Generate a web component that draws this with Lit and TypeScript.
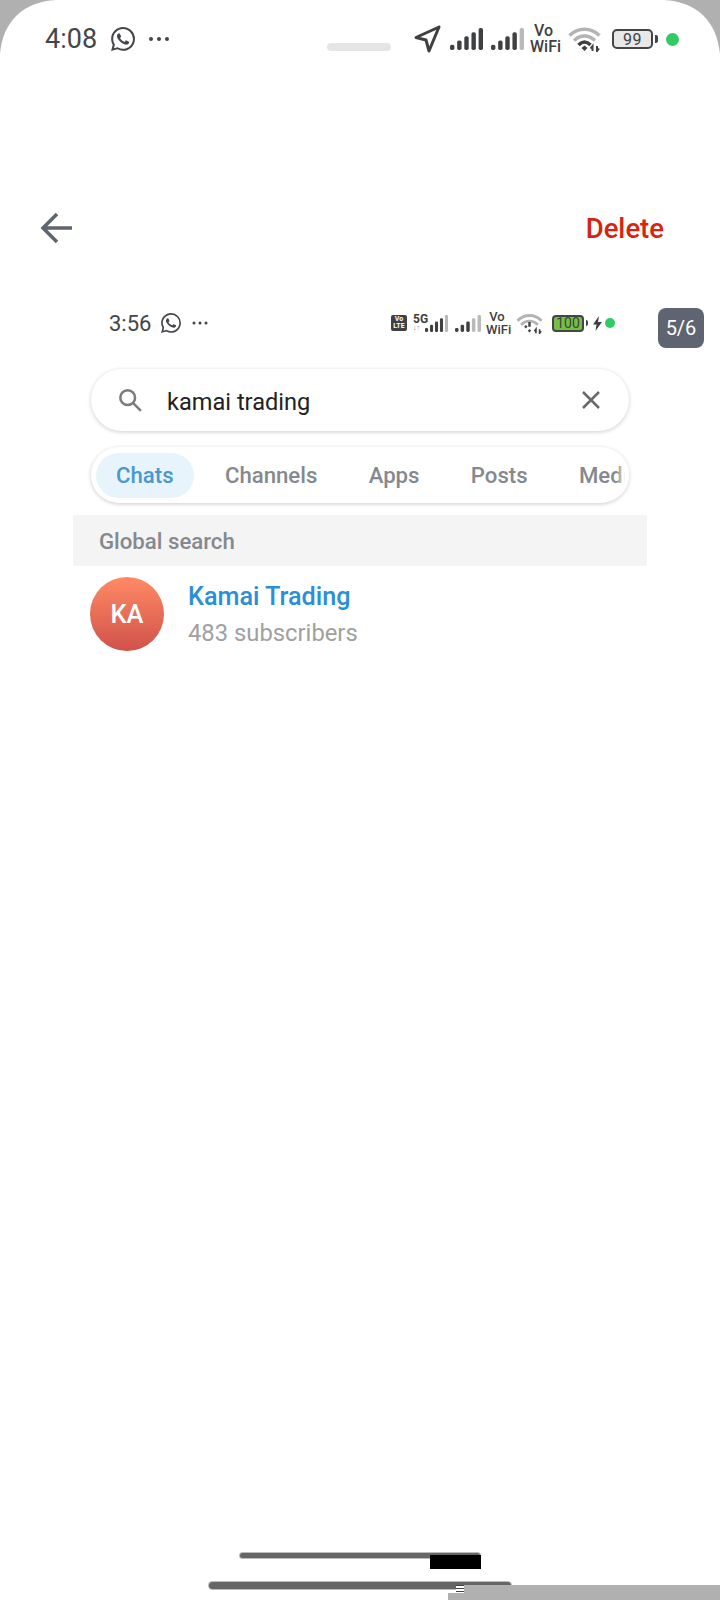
import { LitElement, css, html, svg } from "lit";
import { customElement } from "lit/decorators.js";

const whatsappPath =
  "M17.472 14.382c-.297-.149-1.758-.867-2.03-.967-.273-.099-.471-.148-.67.15-.197.297-.767.966-.94 1.164-.173.199-.347.223-.644.075-.297-.15-1.255-.463-2.39-1.475-.883-.788-1.48-1.761-1.653-2.059-.173-.297-.018-.458.13-.606.134-.133.298-.347.446-.52.149-.174.198-.298.298-.497.099-.198.05-.371-.025-.52-.075-.149-.669-1.612-.916-2.207-.242-.579-.487-.5-.669-.51-.173-.008-.371-.01-.57-.01-.198 0-.52.074-.792.372-.272.297-1.04 1.016-1.04 2.479 0 1.462 1.065 2.875 1.213 3.074.149.198 2.096 3.2 5.077 4.487.709.306 1.262.489 1.694.625.712.227 1.36.195 1.871.118.571-.085 1.758-.719 2.006-1.413.248-.694.248-1.289.173-1.413-.074-.124-.272-.198-.57-.347m-5.421 7.403h-.004a9.87 9.87 0 01-5.031-1.378l-.361-.214-3.741.982.998-3.648-.235-.374a9.86 9.86 0 01-1.51-5.26c.001-5.45 4.436-9.884 9.888-9.884 2.64 0 5.122 1.03 6.988 2.898a9.825 9.825 0 012.893 6.994c-.003 5.45-4.437 9.884-9.885 9.884m8.413-18.297A11.815 11.815 0 0012.05 0C5.495 0 .16 5.335.157 11.892c0 2.096.547 4.142 1.588 5.945L.057 24l6.305-1.654a11.882 11.882 0 005.683 1.448h.005c6.554 0 11.89-5.335 11.893-11.893a11.821 11.821 0 00-3.48-8.413Z";

function whatsapp(size: number) {
  return html`<svg width=${size} height=${size} viewBox="0 0 24 24" fill="#444548">
    <path d=${whatsappPath}></path>
  </svg>`;
}

function dots(width: number, r: number) {
  const step = width / 3;
  return html`<svg width=${width} height="8" viewBox="0 0 ${width} 8" fill="#444548">
    ${[0, 1, 2].map((i) => svg`<circle cx=${step * i + step / 2} cy="4" r=${r}></circle>`)}
  </svg>`;
}

// five bars growing to the right, dimmed ones are the unused signal levels
function signal(width: number, height: number, dimmed: number) {
  const barW = width / 7.500;
  const step = (width - barW) / 4;
  return html`<svg width=${width} height=${height} viewBox="0 0 ${width} ${height}">
    ${[0, 1, 2, 3, 4].map((i) => {
      const h = height * (0.24 + 0.19 * i);
      const fill = i >= 5 - dimmed ? "#b9b9b9" : "#3f4042";
      return svg`<rect x=${i * step} y=${height - h} width=${barW} height=${h} rx=${barW / 2.5} fill=${fill}></rect>`;
    })}
  </svg>`;
}

function wifi(width: number, height: number, broken = false) {
  return html`<svg width=${width} height=${height} viewBox="0 0 33 26" fill="none">
    <path d="M1.500 9.500C10 1 23 1 31.500 9.500" stroke="#b4b4b4" stroke-width="3.500"></path>
    <path d="M6 14.500C12.500 8.500 20.500 8.500 27 14.500" stroke="#b4b4b4" stroke-width="3.500"></path>
    ${broken
      ? svg`<path d="M11 16l2 2M16.500 11v6M15.500 21l2 2M7 22h.1" stroke="#3f4042" stroke-width="3"></path>`
      : svg`<path d="M10.500 19C14.500 15 18.500 15 22.500 19" stroke="#3f4042" stroke-width="3.500"></path>
          <path d="M13.500 22L16.500 19.500L19.500 22L16.500 25Z" fill="#3f4042"></path>`}
    <path d="M24.500 25v-5l-2 2.500M29 20v5l2-2.500" stroke="#3f4042" stroke-width="2"></path>
  </svg>`;
}

@customElement("app-root")
export class AppRoot extends LitElement {
  static styles = css`
    :host {
      display: block;
      position: relative;
      width: 720px;
      height: 1600px;
      overflow: hidden;
      background: #fff;
      font-family: Roboto, "Liberation Sans", sans-serif;
      color: #444548;
    }

    * {
      box-sizing: border-box;
    }

    svg {
      display: block;
      flex: none;
    }

    .corner {
      position: absolute;
      top: 0;
    }

    .corner.left {
      left: 0;
    }

    .corner.right {
      right: 0;
    }

    .statusbar {
      display: flex;
      align-items: center;
      height: 76px;
      padding: 2px 0 0 45px;
    }

    .clock {
      font-size: 27px;
      line-height: 32px;
      width: 66px;
    }

    .statusbar .dots {
      margin-left: 12px;
    }

    .notch {
      width: 64px;
      height: 8px;
      margin: 16px 0 0 156px;
      border-radius: 4px;
      background: #e4e5e7;
    }

    .status-icons {
      display: flex;
      align-items: center;
      margin-left: 23px;
    }

    .vowifi {
      display: flex;
      flex-direction: column;
      color: #3f4042;
      font-weight: 500;
      line-height: 1;
    }

    .statusbar .vowifi {
      width: 32px;
      margin: 0 6px;
      font-size: 16px;
    }

    .battery {
      display: flex;
      align-items: center;
      justify-content: center;
      border: 2px solid #444548;
      border-radius: 5px;
      color: #3f4042;
    }

    .statusbar .battery {
      width: 41px;
      height: 20px;
      background: #e8e8e8;
      font-size: 16px;
      margin-left: 11px;
      letter-spacing: 0.6px;
    }

    .battery-cap {
      flex: none;
      background: #444548;
      border-radius: 0 2px 2px 0;
    }

    .statusbar .battery-cap {
      width: 3px;
      height: 8px;
      margin-left: 2px;
    }

    .green-dot {
      flex: none;
      border-radius: 50%;
      background: #2ecc63;
    }

    .statusbar .green-dot {
      width: 13px;
      height: 13px;
      margin-left: 8px;
    }

    .topbar {
      display: flex;
      align-items: center;
      justify-content: space-between;
      height: 48px;
      margin-top: 128px;
      padding: 0 56px 0 40px;
    }

    .delete {
      color: #d9230f;
      font-size: 27.500px;
      font-weight: 500;
    }

    .shot-status {
      display: flex;
      align-items: center;
      height: 40px;
      margin-top: 51px;
      padding-left: 109px;
    }

    .shot-clock {
      width: 52px;
      font-size: 22px;
    }

    .shot-status .dots {
      margin-left: 10px;
    }

    .shot-icons {
      display: flex;
      align-items: center;
      margin-left: 182px;
    }

    .lte {
      display: flex;
      flex-direction: column;
      align-items: center;
      justify-content: center;
      width: 16px;
      height: 16px;
      border-radius: 2px;
      background: #3f4042;
      color: #fff;
      font-size: 7px;
      font-weight: 700;
      line-height: 7px;
    }

    .fiveg {
      display: flex;
      flex-direction: column;
      flex: none;
      width: 12px;
      margin-left: 6px;
      color: #3f4042;
      font-size: 12px;
      font-weight: 700;
      line-height: 11px;
      white-space: nowrap;
    }

    .fiveg span:last-child {
      color: #8a8a8a;
      font-size: 7px;
      line-height: 7px;
    }

    .shot-icons .vowifi {
      width: 24px;
      margin: 0 6px 0 5px;
      font-size: 13px;
    }

    .shot-icons .battery {
      width: 32px;
      height: 17px;
      margin-left: 9px;
      background: #74c043;
      border-radius: 4px;
      font-size: 14px;
    }

    .shot-icons .battery-cap {
      width: 2px;
      height: 6px;
      margin-left: 2px;
    }

    .bolt {
      margin-left: 5px;
    }

    .shot-icons .green-dot {
      width: 10px;
      height: 10px;
      margin-left: 3px;
    }

    .badge {
      display: flex;
      align-items: center;
      justify-content: center;
      width: 46px;
      height: 40px;
      margin: 10px 0 0 43px;
      border-radius: 8px;
      background: #5e6470;
      color: #fff;
      font-size: 20px;
    }

    .search,
    .tabs {
      display: flex;
      align-items: center;
      width: 538px;
      margin-left: 91px;
      background: #fff;
      box-shadow: 0 1px 4px rgba(0, 0, 0, 0.2);
    }

    .search {
      height: 62px;
      margin-top: 26px;
      padding: 0 28px 0 27px;
      border-radius: 31px;
    }

    .query {
      flex: 1;
      margin-left: 25px;
      padding-top: 3px;
      color: #222;
      font-size: 23.600px;
    }

    .tabs {
      position: relative;
      height: 56px;
      margin-top: 16px;
      padding-left: 5px;
      border-radius: 28px;
      overflow: hidden;
      font-size: 22.200px;
      font-weight: 500;
      color: #85898f;
    }

    .tabs::after {
      content: "";
      position: absolute;
      top: 0;
      right: 0;
      bottom: 0;
      width: 12px;
      background: linear-gradient(to right, rgba(255, 255, 255, 0), #fff 70%);
    }

    .tab {
      flex: none;
      padding: 0 20px;
      height: 45px;
      line-height: 45px;
      border-radius: 23px;
    }

    .tab + .tab {
      margin-left: 11.300px;
    }

    .tab.active {
      background: #e8f4fb;
      color: #4a97d1;
    }

    .section {
      width: 574px;
      height: 51px;
      margin: 12px 0 0 73px;
      padding: 1px 0 0 26px;
      background: #f4f4f4;
      color: #85898f;
      font-size: 22.200px;
      font-weight: 500;
      line-height: 51px;
    }

    .result {
      display: flex;
      align-items: center;
      margin: 11px 0 0 90px;
    }

    .avatar {
      display: flex;
      align-items: center;
      justify-content: center;
      width: 74px;
      height: 74px;
      border-radius: 50%;
      background: linear-gradient(#ff8a65, #d0524a);
      color: #fff;
      font-size: 25.500px;
      font-weight: 500;
    }

    .result-text {
      margin-left: 24px;
      padding-top: 2px;
    }

    .name {
      color: #2a8fd8;
      font-size: 25.200px;
      font-weight: 500;
      line-height: 36px;
    }

    .subs {
      color: #a0a0a0;
      font-size: 23.800px;
      line-height: 36px;
    }

    .bar {
      position: absolute;
      border-radius: 4px;
      background: #666;
      box-shadow: 0 0 0 1px #bdbdbd;
    }

    .bar.one {
      left: 240px;
      top: 1553px;
      width: 240px;
      height: 5px;
    }

    .bar.two {
      left: 209px;
      top: 1582px;
      width: 302px;
      height: 7px;
    }

    .patch {
      position: absolute;
    }

    .patch.black {
      left: 430px;
      top: 1555px;
      width: 51px;
      height: 14px;
      background: #000;
    }

    .patch.grey-top {
      left: 464px;
      top: 1585px;
      width: 256px;
      height: 8px;
      background: #b0b0b0;
    }

    .patch.grey-bottom {
      left: 448px;
      top: 1593px;
      width: 272px;
      height: 7px;
      background: #b0b0b0;
    }

    .patch.stripes {
      left: 456px;
      top: 1585px;
      width: 8px;
      height: 8px;
      background: repeating-linear-gradient(#444 0 1px, #fff 1px 3px);
    }
  `;

  render() {
    return html`
      <div class="statusbar">
        <span class="clock">4:08</span>
        ${whatsapp(24)}
        <span class="dots">${dots(24, 2)}</span>
        <div class="notch"></div>
        <div class="status-icons">
          <svg width="27" height="28" viewBox="0 0 27 28" fill="none" stroke="#3f4042" stroke-width="3" stroke-linejoin="round">
            <path d="M25 2L2 12.500L12 15L15 26Z"></path>
          </svg>
          <span style="width:9px"></span>
          ${signal(33, 22, 0)}
          <span style="width:8px"></span>
          ${signal(33, 22, 1)}
          <div class="vowifi"><span>&nbsp;Vo</span><span>WiFi</span></div>
          ${wifi(33, 26)}
          <div class="battery">99</div>
          <div class="battery-cap"></div>
          <div class="green-dot"></div>
        </div>
      </div>

      <div class="topbar">
        <svg width="32" height="32" viewBox="0 0 32 32" fill="none" stroke="#5e6470" stroke-width="3.500">
          <path d="M32 16H3M17 2L3 16L17 30"></path>
        </svg>
        <span class="delete">Delete</span>
      </div>

      <div class="shot-status">
        <span class="shot-clock">3:56</span>
        ${whatsapp(20)}
        <span class="dots">${dots(18, 1.500)}</span>
        <div class="shot-icons">
          <div class="lte"><span>Vo</span><span>LTE</span></div>
          <div class="fiveg"><span>5G</span><span>↓↑</span></div>
          ${signal(23, 17, 1)}
          <span style="width:7px"></span>
          ${signal(26, 17, 2)}
          <div class="vowifi"><span>&nbsp;Vo</span><span>WiFi</span></div>
          ${wifi(27, 21, true)}
          <div class="battery">100</div>
          <div class="battery-cap"></div>
          <svg class="bolt" width="9" height="15" viewBox="0 0 9 15" fill="#3f4042">
            <path d="M6 0L0 8.500H3.500L2.500 15L9 6H5Z"></path>
          </svg>
          <div class="green-dot"></div>
        </div>
        <div class="badge">5/6</div>
      </div>

      <div class="search">
        <svg width="24" height="24" viewBox="0 0 26 26" fill="none" stroke="#7b7b7f" stroke-width="2.700" stroke-linecap="round">
          <circle cx="10.500" cy="10.500" r="8"></circle>
          <path d="M16.500 16.500L24 24"></path>
        </svg>
        <span class="query">kamai trading</span>
        <svg width="20" height="20" viewBox="0 0 20 20" fill="none" stroke="#68686c" stroke-width="2.500">
          <path d="M2 2L18 18M18 2L2 18"></path>
        </svg>
      </div>

      <div class="tabs">
        <span class="tab active">Chats</span>
        <span class="tab">Channels</span>
        <span class="tab">Apps</span>
        <span class="tab">Posts</span>
        <span class="tab">Media</span>
      </div>

      <div class="section">Global search</div>

      <div class="result">
        <div class="avatar">KA</div>
        <div class="result-text">
          <div class="name">Kamai Trading</div>
          <div class="subs">483 subscribers</div>
        </div>
      </div>

      <svg class="corner left" width="56" height="54" viewBox="0 0 56 54" fill="#b0b0b0">
        <path d="M0 0H56C22 2 3 22 0 54Z"></path>
      </svg>
      <svg class="corner right" width="56" height="54" viewBox="0 0 56 54" fill="#b0b0b0">
        <path d="M56 0H0C34 2 53 22 56 54Z"></path>
      </svg>

      <div class="bar one"></div>
      <div class="patch black"></div>
      <div class="bar two"></div>
      <div class="patch stripes"></div>
      <div class="patch grey-top"></div>
      <div class="patch grey-bottom"></div>
    `;
  }
}
